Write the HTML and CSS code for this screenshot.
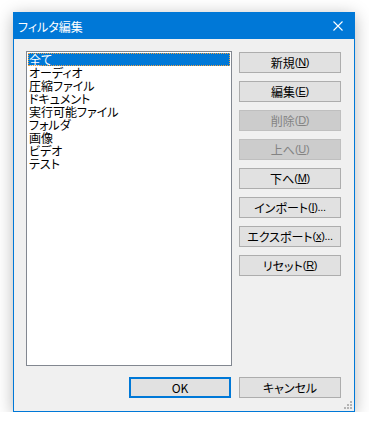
FILE: index.html
```html
<!DOCTYPE html>
<html lang="ja">
<head>
<meta charset="utf-8">
<title>フィルタ編集</title>
<link rel="stylesheet" href="styles.css">
</head>
<body>
<div class="window">
  <div class="titlebar">
    <span class="title">フィルタ編集</span>
    <svg class="close" width="10" height="10" viewBox="0 0 10 10"><path d="M0.5 0.5 L9.5 9.5 M9.5 0.5 L0.5 9.5" stroke="#fff" stroke-width="1.1" fill="none"/></svg>
  </div>
  <div class="body">
    <div class="main">
      <ul class="listbox">
        <li class="item selected">全て</li>
        <li class="item">オーディオ</li>
        <li class="item">圧縮ファイル</li>
        <li class="item">ドキュメント</li>
        <li class="item">実行可能ファイル</li>
        <li class="item">フォルダ</li>
        <li class="item">画像</li>
        <li class="item">ビデオ</li>
        <li class="item">テスト</li>
      </ul>
      <div class="side">
        <button class="btn">新規<span class="mn">(<u>N</u>)</span></button>
        <button class="btn">編集<span class="mn">(<u>E</u>)</span></button>
        <button class="btn" disabled>削除<span class="mn">(<u>D</u>)</span></button>
        <button class="btn" disabled>上へ<span class="mn">(<u>U</u>)</span></button>
        <button class="btn">下へ<span class="mn">(<u>M</u>)</span></button>
        <button class="btn">インポート<span class="mn">(<u>I</u>)...</span></button>
        <button class="btn">エクスポート<span class="mn">(<u>x</u>)...</span></button>
        <button class="btn">リセット<span class="mn">(<u>R</u>)</span></button>
      </div>
    </div>
    <div class="footer">
      <button class="btn default">OK</button>
      <button class="btn">キャンセル</button>
    </div>
    <div class="grip">
      <i></i><i></i><i></i><i></i><i></i><i></i>
    </div>
  </div>
</div>
</body>
</html>
```
FILE: styles.css
```css
html, body {
  margin: 0;
  padding: 0;
  background: #ffffff;
}
body {
  font-family: "Noto Sans CJK JP", "Noto Sans", sans-serif;
  font-size: 12px;
  font-feature-settings: "palt";
  color: #000;
  padding: 12px 0 0 13px;
}
.window {
  width: 340px;
  height: 398px;
  border: 1px solid #0078d7;
  background: #f0f0f0;
  box-shadow: 0 3px 16px rgba(0,0,0,0.28);
  display: flex;
  flex-direction: column;
}
.titlebar {
  height: 26px;
  background: #0078d7;
  display: flex;
  align-items: center;
  justify-content: space-between;
  padding: 0 10px 0 4px;
  color: #fff;
  flex: none;
}
.title {
  font-size: 12px;
  line-height: 14px;
  margin-top: 1px;
}
.close {
  display: block;
  margin-right: 1px;
}
.body {
  flex: 1;
  padding: 12px 13px 13px 12px;
  display: flex;
  flex-direction: column;
  position: relative;
}
.main {
  display: flex;
  gap: 7px;
  height: 313px;
}
.listbox {
  list-style: none;
  margin: 0;
  padding: 1px;
  width: 204px;
  height: 311px;
  border: 1px solid #828790;
  background: #fff;
  box-sizing: content-box;
}
.item {
  height: 13px;
  line-height: 13px;
  padding-left: 1px;
  white-space: nowrap;
}
.item.selected {
  background: #0078d7;
  color: #fff;
  outline: 1px dotted #f0a040;
  outline-offset: -1px;
}
.side {
  display: flex;
  flex-direction: column;
  gap: 8px;
  padding-top: 1px;
}
.btn {
  width: 102px;
  height: 21px;
  box-sizing: border-box;
  border: 1px solid #adadad;
  background: #e1e1e1;
  font-family: inherit;
  font-size: 12px;
  font-feature-settings: "palt";
  color: #000;
  padding: 0;
  margin: 0;
  line-height: 17px;
  display: flex;
  align-items: center;
  justify-content: center;
}
.btn:disabled {
  background: #cccccc;
  border-color: #bfbfbf;
  color: #838383;
}
.mn {
  font-family: "Liberation Sans", sans-serif;
  font-size: 11px;
  letter-spacing: -0.3px;
}
.mn u {
  text-underline-offset: 1px;
}
.btn.default {
  border: 2px solid #0078d7;
}
.footer {
  display: flex;
  justify-content: flex-end;
  gap: 8px;
  margin-top: 13px;
  padding-right: 0;
}
.grip {
  position: absolute;
  right: 2px;
  bottom: 2px;
  width: 8px;
  height: 8px;
  display: grid;
  grid-template-columns: repeat(3, 2px);
  grid-template-rows: repeat(3, 2px);
  gap: 1px;
}
.grip i {
  display: block;
  background: #b4b4b4;
}
.grip i:nth-child(1) { grid-area: 1 / 3; }
.grip i:nth-child(2) { grid-area: 2 / 2; }
.grip i:nth-child(3) { grid-area: 2 / 3; }
.grip i:nth-child(4) { grid-area: 3 / 1; }
.grip i:nth-child(5) { grid-area: 3 / 2; }
.grip i:nth-child(6) { grid-area: 3 / 3; }
```
